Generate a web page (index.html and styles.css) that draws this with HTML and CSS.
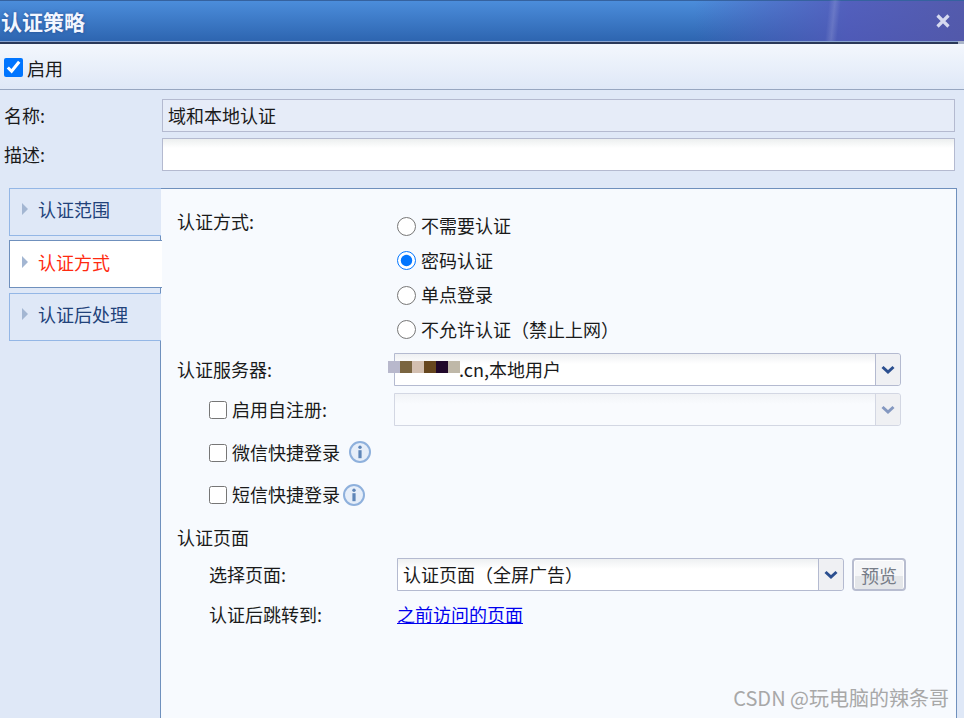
FILE: index.html
```html
<!DOCTYPE html>
<html lang="zh-CN">
<head>
<meta charset="utf-8">
<title>认证策略</title>
<link rel="stylesheet" href="styles.css">
</head>
<body>
<div class="dialog">
  <header class="titlebar">
    <span class="streak"></span>
    <h1 class="title">认证策略</h1>
    <svg class="close" width="16" height="16" viewBox="0 0 16 16"><path d="M2.5 2.5 L13.5 13.5 M13.5 2.5 L2.5 13.5" stroke="#d6daf0" stroke-width="3.2" fill="none"/></svg>
  </header>
  <div class="toolbar">
    <label class="enable"><input class="check-lg" type="checkbox" checked><span>启用</span></label>
  </div>
  <div class="fields">
    <div class="field"><span class="field-label">名称:</span><input class="text-input readonly" type="text" value="域和本地认证" readonly></div>
    <div class="field"><span class="field-label">描述:</span><input class="text-input" type="text"></div>
  </div>
  <div class="main">
    <nav class="tabs">
      <div class="tab"><svg class="tab-arrow" width="8" height="14" viewBox="0 0 8 14"><path d="M1 1 L7 7 L1 13 L1 10 L3.5 7 L1 4 Z M1 3 L7 7 L1 11 Z" fill="#a3b6d2"/></svg>认证范围</div>
      <div class="tab active"><svg class="tab-arrow" width="8" height="14" viewBox="0 0 8 14"><path d="M1 1 L7 7 L1 13 L1 10 L3.5 7 L1 4 Z M1 3 L7 7 L1 11 Z" fill="#a3b6d2"/></svg>认证方式</div>
      <div class="tab"><svg class="tab-arrow" width="8" height="14" viewBox="0 0 8 14"><path d="M1 1 L7 7 L1 13 L1 10 L3.5 7 L1 4 Z M1 3 L7 7 L1 11 Z" fill="#a3b6d2"/></svg>认证后处理</div>
    </nav>
    <section class="panel">
      <div class="method">
        <span class="row-label">认证方式:</span>
        <div class="radios">
          <label class="radio"><input type="radio" name="auth"><span>不需要认证</span></label>
          <label class="radio"><input type="radio" name="auth" checked><span>密码认证</span></label>
          <label class="radio"><input type="radio" name="auth"><span>单点登录</span></label>
          <label class="radio"><input type="radio" name="auth"><span>不允许认证（禁止上网）</span></label>
        </div>
      </div>
      <div class="row row-server">
        <span class="row-label">认证服务器:</span>
        <div class="select wide">
          <span class="select-text server-text">.cn,本地用户</span>
          <span class="select-btn"><svg width="14" height="10" viewBox="0 0 14 10"><path d="M1.5 2 L7 7 L12.5 2" stroke="#2b4f8f" stroke-width="3" fill="none"/></svg></span>
          <span class="mosaic"><i class="m1"></i><i class="m2"></i><i class="m3"></i><i class="m4"></i><i class="m5"></i><i class="m6"></i></span>
        </div>
      </div>
      <div class="row row-self">
        <label class="check check-label"><input type="checkbox"><span>启用自注册:</span></label>
        <div class="select wide disabled">
          <span class="select-text"></span>
          <span class="select-btn"><svg width="14" height="10" viewBox="0 0 14 10"><path d="M1.5 2 L7 7 L12.5 2" stroke="#8498c0" stroke-width="3" fill="none"/></svg></span>
        </div>
      </div>
      <div class="quick quick-wx">
        <label class="check"><input type="checkbox"><span>微信快捷登录</span></label>
        <svg class="info info-wx" width="24" height="24" viewBox="0 0 24 24"><circle cx="12" cy="12" r="10" fill="#e6eef9" stroke="#8eb0dc" stroke-width="2"/><circle cx="12" cy="7.2" r="1.7" fill="#5f86b8"/><rect x="10.4" y="10.2" width="3.2" height="8" fill="#5f86b8"/></svg>
      </div>
      <div class="quick quick-sms">
        <label class="check"><input type="checkbox"><span>短信快捷登录</span></label>
        <svg class="info" width="24" height="24" viewBox="0 0 24 24"><circle cx="12" cy="12" r="10" fill="#e6eef9" stroke="#8eb0dc" stroke-width="2"/><circle cx="12" cy="7.2" r="1.7" fill="#5f86b8"/><rect x="10.4" y="10.2" width="3.2" height="8" fill="#5f86b8"/></svg>
      </div>
      <div class="section-title">认证页面</div>
      <div class="row row-page">
        <span class="row-label sub">选择页面:</span>
        <div class="select page">
          <span class="select-text">认证页面（全屏广告）</span>
          <span class="select-btn"><svg width="14" height="10" viewBox="0 0 14 10"><path d="M1.5 2 L7 7 L12.5 2" stroke="#2b4f8f" stroke-width="3" fill="none"/></svg></span>
        </div>
        <button class="preview" type="button">预览</button>
      </div>
      <div class="row row-jump">
        <span class="row-label sub">认证后跳转到:</span>
        <a class="link" href="#">之前访问的页面</a>
      </div>
    </section>
  </div>
</div>
<div class="watermark">CSDN @玩电脑的辣条哥</div>
</body>
</html>
```
FILE: styles.css
```css
* { box-sizing: border-box; }
html, body { margin: 0; padding: 0; height: 718px; overflow: hidden; }
body {
  background: #dfe8f7;
  color: #1a1a1a;
  font-family: "Noto Sans CJK SC", "Noto Sans", sans-serif;
  font-size: 18px;
  line-height: 26px;
  position: relative;
}
.dialog { display: flex; flex-direction: column; height: 718px; }

.field-label, .row-label, .section-title, .radio span, .check span, .link {
  line-height: 24px;
  padding-bottom: 2px;
}

.titlebar {
  position: relative;
  height: 44px;
  flex: none;
  overflow: hidden;
  display: flex;
  align-items: center;
  justify-content: space-between;
  padding: 0 13px 3px 1px;
  background:
    linear-gradient(to bottom, #35629f 0, #35629f 1px, rgba(0,0,0,0) 1px),
    linear-gradient(to top, #2a3858 0, #2a3858 2px, #8aa4cf 2px, #8aa4cf 3px, rgba(0,0,0,0) 3px),
    linear-gradient(to right, rgba(84,88,184,0) 0, rgba(84,88,184,0) 72%, rgba(84,88,184,0.45) 80%, rgba(84,88,184,0.85) 88%, rgba(84,88,170,0.95) 100%),
    linear-gradient(to bottom, #4c8edc 0, #2b62ad 100%);
}
.titlebar::after {
  content: "";
  position: absolute;
  right: 0;
  bottom: 0;
  width: 6px;
  height: 3px;
  background: #a9b4c8;
}
.streak {
  position: absolute;
  left: 827px;
  top: 0;
  bottom: 3px;
  width: 12px;
  display: block;
  background: linear-gradient(to right, rgba(255,255,255,0), rgba(255,255,255,0.14) 50%, rgba(255,255,255,0));
  transform: skewX(-6deg);
}
.title {
  margin: 0;
  position: relative;
  font-size: 21px;
  font-weight: 700;
  line-height: 30px;
  color: #f2f6ff;
  text-shadow: 0 0 3px rgba(20,50,110,0.6);
}
.close { position: relative; display: block; }

.toolbar {
  flex: none;
  height: 46px;
  padding: 2px 0 0 4px;
  display: flex;
  align-items: center;
  border-bottom: 1px solid #97a6c0;
  background: linear-gradient(to bottom, #f3f7fd, #dfe8f7);
}
.enable { display: flex; align-items: center; gap: 4px; }
.check-lg { width: 19px; height: 19px; margin: 0; }

.fields { flex: none; padding: 9px 9px 0 4px; display: flex; flex-direction: column; gap: 6px; }
.field { display: flex; align-items: center; height: 33px; }
.field-label { width: 158px; flex: none; }
.text-input {
  flex: 1;
  height: 33px;
  margin: 0;
  padding: 0 5px 2px;
  border: 1px solid #b4bad0;
  border-radius: 0;
  outline: none;
  font: inherit;
  color: inherit;
  background: linear-gradient(to bottom, #ecefef 0, #ffffff 9px);
}
.text-input.readonly { background: #e6ecf8; }

.main { flex: 1; display: flex; margin-top: 17px; padding: 0 7px 0 9px; min-height: 0; }
.tabs { width: 151px; flex: none; display: flex; flex-direction: column; position: relative; z-index: 1; }
.tab {
  width: 152px;
  height: 48px;
  display: flex;
  align-items: center;
  padding-left: 11px;
  padding-bottom: 6px;
  color: #22427a;
  border: 1px solid #94b7e6;
  border-right: 0;
  background: #dfe8f7;
}
.tab + .tab { margin-top: 4px; }
.tab.active + .tab { margin-top: 5px; }
.tab-arrow { margin-right: 9px; flex: none; }
.tab.active { color: #ff2a10; background: #ffffff; border-color: #6f90bd; width: 153px; padding-bottom: 4px; }

.panel {
  flex: 1;
  height: 560px;
  padding: 20px 0 0 16px;
  background: #f7fafe;
  border: 1px solid #6f90bd;
  border-bottom: 0;
}
.method { display: flex; height: 138px; }
.row-label { width: 217px; flex: none; }
.check-label { width: 217px; flex: none; padding-left: 32px; }
.radios { display: flex; flex-direction: column; padding-left: 3px; }
.radio { display: flex; align-items: center; height: 34.5px; gap: 5px; }
.radio input { width: 19px; height: 19px; margin: 0; flex: none; }

.row { display: flex; align-items: center; }
.row-server { margin-top: 6px; }
.row-self { margin-top: 7px; }
.select {
  height: 33px;
  display: flex;
  position: relative;
  border: 1px solid #b4bad0;
  border-radius: 0 3px 3px 0;
  background: linear-gradient(to bottom, #eef0f2 0, #ffffff 10px);
}
.select.wide { width: 507px; }
.select.page { width: 447px; margin-left: 3px; }
.select.disabled { border-color: #d3d7e3; background: linear-gradient(to bottom, #f1f3f6 0, #f9fbfe 10px); }
.select-text { flex: 1; padding-left: 5px; line-height: 31px; white-space: nowrap; }
.server-text { padding-left: 64px; }
.select-btn {
  width: 25px;
  flex: none;
  display: flex;
  align-items: center;
  justify-content: center;
  background: #eff0f3;
  border-left: 1px solid #b4bad0;
  border-radius: 0 3px 3px 0;
}
.select.disabled .select-btn { border-left-color: #d3d7e3; }
.mosaic { position: absolute; left: -7px; top: 7px; display: flex; }
.mosaic i { display: block; width: 12px; height: 12px; }
.m1 { background: #b8b8cc; }
.m2 { background: #7a6540; }
.m3 { background: #d3bfb0; }
.m4 { background: #66461e; }
.m5 { background: #20082a; }
.m6 { background: #bfb8a8; }

.check { display: inline-flex; align-items: center; gap: 5px; }
.check input { width: 18px; height: 18px; margin: 0; flex: none; }
.quick { display: flex; align-items: center; height: 34px; padding-left: 32px; }
.quick-wx { margin-top: 10px; }
.quick-sms { margin-top: 8px; }
.info { margin-left: 2px; flex: none; display: block; }
.info-wx { margin-left: 8px; margin-top: -2px; }
.section-title { margin-top: 13px; }
.row-page { margin-top: 7px; }
.sub { padding-left: 32px; }
.preview {
  width: 54px;
  height: 33px;
  margin: 0 0 0 8px;
  padding: 0;
  font: inherit;
  color: #777d88;
  border: 2px solid #b8bdd0;
  border-radius: 4px;
  box-shadow: inset 0 1px 0 #ffffff, inset 1px 0 0 #ffffff, inset -1px 0 0 #ffffff;
  background: linear-gradient(to bottom, #f5f6f8 0, #f5f6f8 55%, #e4e6e9 55%, #e4e6e9 100%);
}
.row-jump { margin-top: 11px; }
.link { color: #0000ee; text-decoration: underline; margin-left: 3px; }

.watermark {
  position: absolute;
  right: 15px;
  top: 685px;
  color: #a8a8a8;
  font-size: 20px;
  white-space: nowrap;
}
```
